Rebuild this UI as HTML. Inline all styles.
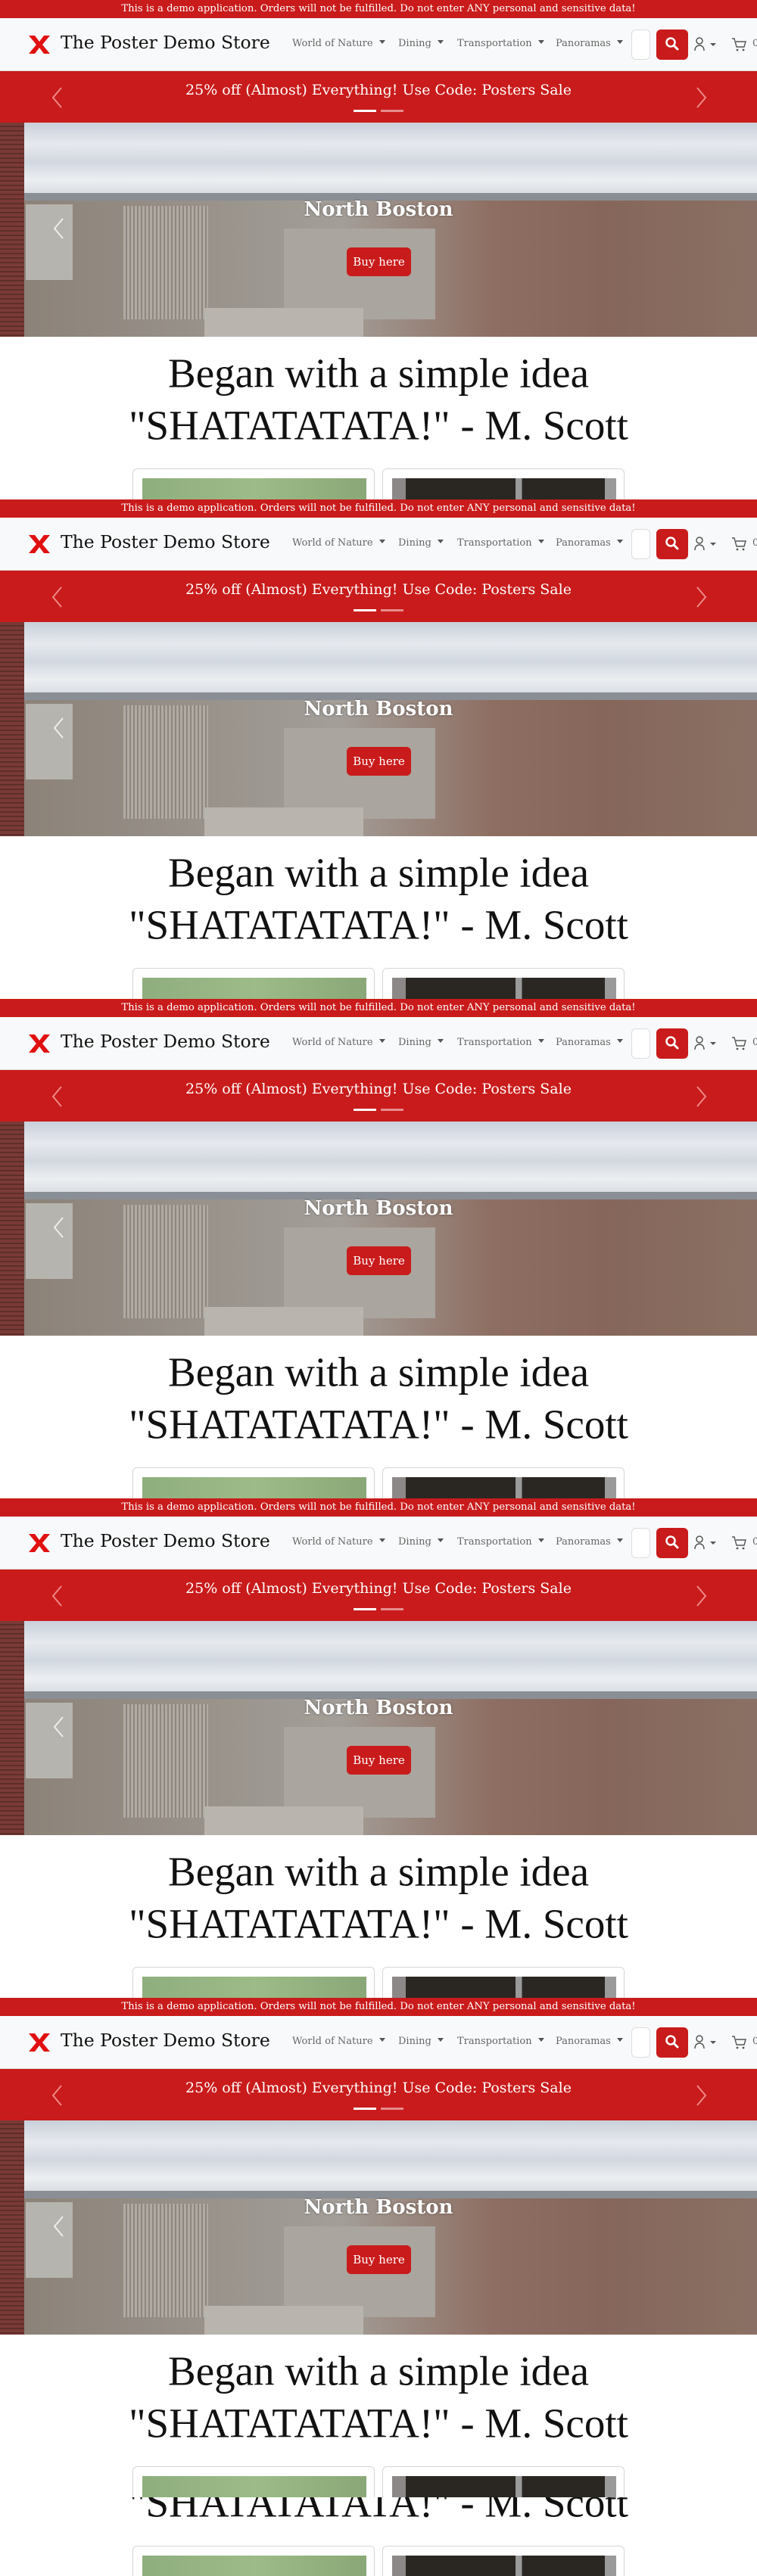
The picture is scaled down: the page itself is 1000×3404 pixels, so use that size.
<!DOCTYPE html>
<html><head><meta charset="utf-8">
<style>
*{box-sizing:border-box;margin:0;padding:0}
body{width:1000px;height:3404px;overflow:hidden;background:#fff;font-family:"DejaVu Serif","Liberation Serif",serif}
.blk{position:relative;width:1000px;height:660px;overflow:hidden;background:#fff}
.demo{position:absolute;left:0;top:0;width:1000px;height:24px;background:#c91b1b;color:#fff;font-size:13.2px;line-height:24px;text-align:center}
.nav{position:absolute;left:0;top:24px;width:1000px;height:70px;background:#f8f9fa;border-bottom:1px solid #ddd}
.logo{position:absolute;left:37px;top:23px;width:30px;height:24px}
.brand{position:absolute;left:80px;top:18px;font-size:23.5px;color:#111;white-space:nowrap}
.mi{position:absolute;top:26px;font-size:13px;color:#666;white-space:nowrap}
.mi:after{content:"";display:inline-block;margin-left:8px;vertical-align:3px;border-left:4px solid transparent;border-right:4px solid transparent;border-top:5px solid #555}
.sin{position:absolute;left:834px;top:15px;width:25px;height:40px;background:#fff;border:1px solid #ddd;border-radius:6px}
.sbt{position:absolute;left:867px;top:15px;width:42px;height:40px;background:#c91b1b;border-radius:6px}
.promo{position:absolute;left:0;top:94px;width:1000px;height:68px;background:#c91b1b;color:#fff}
.promo .t{position:absolute;left:0;right:0;top:14px;text-align:center;font-size:19px}
.ind{position:absolute;top:51px;height:3px;width:30px;background:#fff}
.hero{position:absolute;left:0;top:162px;width:1000px;height:283px;overflow:hidden;background:#8d8a86}
.h1{position:absolute;left:0;right:0;top:493px;transform:translateY(-50%);text-align:center;font-family:"Liberation Serif",serif;font-size:55px;color:#111;white-space:nowrap}
.card{position:absolute;top:619px;width:320px;height:60px;border:1px solid #d5d5d5;border-radius:6px;background:#fff;overflow:hidden}
</style></head><body>

<div class="blk">
<div class="demo">This is a demo application. Orders will not be fulfilled. Do not enter ANY personal and sensitive data!</div>
<div class="nav">
 <svg class="logo" viewBox="0 0 30 24"><path d="M1 0h8l6 8 6-8h8l-10 12 10 12h-8l-6-8-6 8H1l10-12z" fill="#e01010"/></svg>
 <div class="brand">The Poster Demo Store</div>
 <div class="mi" style="left:386px">World of Nature</div>
 <div class="mi" style="left:526px">Dining</div>
 <div class="mi" style="left:604px">Transportation</div>
 <div class="mi" style="left:734px">Panoramas</div>
 <div class="sin"></div>
 <div class="sbt"><svg width="42" height="40" viewBox="0 0 42 40"><circle cx="19" cy="17" r="5.5" stroke="#fff" stroke-width="2.6" fill="none"/><path d="M23 21l5 5" stroke="#fff" stroke-width="3" stroke-linecap="round"/></svg></div>
 <svg style="position:absolute;left:916px;top:24px" width="34" height="22" viewBox="0 0 34 22"><circle cx="8" cy="6" r="4" stroke="#555" stroke-width="1.5" fill="none"/><path d="M2 19c0-5 3-7 6-7s6 2 6 7" stroke="#555" stroke-width="1.5" fill="none"/><path d="M22 9h8l-4 4z" fill="#555"/></svg>
 <svg style="position:absolute;left:965px;top:24px" width="22" height="22" viewBox="0 0 22 22"><path d="M2 3h3l3 11h10l2-7H7" stroke="#555" stroke-width="1.4" fill="none"/><circle cx="9" cy="18" r="1.4" fill="#555"/><circle cx="17" cy="18" r="1.4" fill="#555"/></svg>
 <div style="position:absolute;left:994px;top:26px;font-size:13px;color:#666">0</div>
</div>
<div class="promo">
 <div class="t">25% off (Almost) Everything! Use Code: Posters Sale</div>
 <svg style="position:absolute;left:66px;top:20px" width="18" height="30" viewBox="0 0 18 30"><path d="M15 2L4 15l11 13" stroke="#e88" stroke-width="2" fill="none"/></svg>
 <svg style="position:absolute;left:918px;top:20px" width="18" height="30" viewBox="0 0 18 30"><path d="M3 2l11 13L3 28" stroke="#e88" stroke-width="2" fill="none"/></svg>
 <div class="ind" style="left:467px"></div>
 <div class="ind" style="left:503px;opacity:.5"></div>
</div>
<div class="hero">
 <div style="position:absolute;left:0;top:0;width:1000px;height:95px;background:linear-gradient(180deg,#c9d0da 0%,#e6e9ee 30%,#d2d8e0 55%,#eceef1 80%,#d8dde2 100%)"></div>
 <div style="position:absolute;left:0;top:93px;width:1000px;height:10px;background:#8a8f96"></div>
 <div style="position:absolute;left:0;top:103px;width:1000px;height:180px;background:linear-gradient(90deg,#8a8076 0%,#9a948d 30%,#a39e98 45%,#8e6e62 65%,#86665a 80%,#8a7064 100%)"></div>
 <div style="position:absolute;left:34px;top:108px;width:62px;height:100px;background:#b6b4ae"></div>
 <div style="position:absolute;left:163px;top:110px;width:112px;height:150px;background:repeating-linear-gradient(90deg,#b0aaa2 0 3px,#8e8680 3px 5px)"></div>
 <div style="position:absolute;left:375px;top:140px;width:200px;height:120px;background:#aaa59e"></div>
 <div style="position:absolute;left:270px;top:245px;width:210px;height:38px;background:#b9b5ae"></div>
 <div style="position:absolute;left:0;top:0;width:32px;height:283px;background:repeating-linear-gradient(180deg,#7a3a36 0 4px,#5e2e2a 4px 6px)"></div>
 <svg style="position:absolute;left:68px;top:125px" width="18" height="30" viewBox="0 0 18 30"><path d="M15 2L4 15l11 13" stroke="#eee" stroke-width="2" fill="none"/></svg>
 <div style="position:absolute;left:0;right:0;top:100px;text-align:center;color:#fff;font-size:26px;font-weight:bold;text-shadow:0 0 3px rgba(0,0,0,.4)">North Boston</div>
 <div style="position:absolute;left:458px;top:165px;width:85px;height:38px;background:#c91b1b;border-radius:6px;color:#fff;font-size:15px;line-height:38px;text-align:center">Buy here</div>
</div>
<div class="h1">Began with a simple idea</div>
<div class="h1" style="top:562px">"SHATATATATA!" - M. Scott</div>
<div class="card" style="left:175px"><div style="position:absolute;left:12px;top:12px;width:296px;height:60px;background:linear-gradient(90deg,#8fae7e,#9dbb88 50%,#8aa877)"></div></div>
<div class="card" style="left:505px"><div style="position:absolute;left:12px;top:12px;width:296px;height:60px;background:linear-gradient(90deg,#8d8888 0 6%,#2a2622 6% 55%,#9a9a9a 55% 58%,#2a2622 58% 95%,#9a9a9a 95%)"></div></div>
</div>

<div class="blk">
<div class="demo">This is a demo application. Orders will not be fulfilled. Do not enter ANY personal and sensitive data!</div>
<div class="nav">
 <svg class="logo" viewBox="0 0 30 24"><path d="M1 0h8l6 8 6-8h8l-10 12 10 12h-8l-6-8-6 8H1l10-12z" fill="#e01010"/></svg>
 <div class="brand">The Poster Demo Store</div>
 <div class="mi" style="left:386px">World of Nature</div>
 <div class="mi" style="left:526px">Dining</div>
 <div class="mi" style="left:604px">Transportation</div>
 <div class="mi" style="left:734px">Panoramas</div>
 <div class="sin"></div>
 <div class="sbt"><svg width="42" height="40" viewBox="0 0 42 40"><circle cx="19" cy="17" r="5.5" stroke="#fff" stroke-width="2.6" fill="none"/><path d="M23 21l5 5" stroke="#fff" stroke-width="3" stroke-linecap="round"/></svg></div>
 <svg style="position:absolute;left:916px;top:24px" width="34" height="22" viewBox="0 0 34 22"><circle cx="8" cy="6" r="4" stroke="#555" stroke-width="1.5" fill="none"/><path d="M2 19c0-5 3-7 6-7s6 2 6 7" stroke="#555" stroke-width="1.5" fill="none"/><path d="M22 9h8l-4 4z" fill="#555"/></svg>
 <svg style="position:absolute;left:965px;top:24px" width="22" height="22" viewBox="0 0 22 22"><path d="M2 3h3l3 11h10l2-7H7" stroke="#555" stroke-width="1.4" fill="none"/><circle cx="9" cy="18" r="1.4" fill="#555"/><circle cx="17" cy="18" r="1.4" fill="#555"/></svg>
 <div style="position:absolute;left:994px;top:26px;font-size:13px;color:#666">0</div>
</div>
<div class="promo">
 <div class="t">25% off (Almost) Everything! Use Code: Posters Sale</div>
 <svg style="position:absolute;left:66px;top:20px" width="18" height="30" viewBox="0 0 18 30"><path d="M15 2L4 15l11 13" stroke="#e88" stroke-width="2" fill="none"/></svg>
 <svg style="position:absolute;left:918px;top:20px" width="18" height="30" viewBox="0 0 18 30"><path d="M3 2l11 13L3 28" stroke="#e88" stroke-width="2" fill="none"/></svg>
 <div class="ind" style="left:467px"></div>
 <div class="ind" style="left:503px;opacity:.5"></div>
</div>
<div class="hero">
 <div style="position:absolute;left:0;top:0;width:1000px;height:95px;background:linear-gradient(180deg,#c9d0da 0%,#e6e9ee 30%,#d2d8e0 55%,#eceef1 80%,#d8dde2 100%)"></div>
 <div style="position:absolute;left:0;top:93px;width:1000px;height:10px;background:#8a8f96"></div>
 <div style="position:absolute;left:0;top:103px;width:1000px;height:180px;background:linear-gradient(90deg,#8a8076 0%,#9a948d 30%,#a39e98 45%,#8e6e62 65%,#86665a 80%,#8a7064 100%)"></div>
 <div style="position:absolute;left:34px;top:108px;width:62px;height:100px;background:#b6b4ae"></div>
 <div style="position:absolute;left:163px;top:110px;width:112px;height:150px;background:repeating-linear-gradient(90deg,#b0aaa2 0 3px,#8e8680 3px 5px)"></div>
 <div style="position:absolute;left:375px;top:140px;width:200px;height:120px;background:#aaa59e"></div>
 <div style="position:absolute;left:270px;top:245px;width:210px;height:38px;background:#b9b5ae"></div>
 <div style="position:absolute;left:0;top:0;width:32px;height:283px;background:repeating-linear-gradient(180deg,#7a3a36 0 4px,#5e2e2a 4px 6px)"></div>
 <svg style="position:absolute;left:68px;top:125px" width="18" height="30" viewBox="0 0 18 30"><path d="M15 2L4 15l11 13" stroke="#eee" stroke-width="2" fill="none"/></svg>
 <div style="position:absolute;left:0;right:0;top:100px;text-align:center;color:#fff;font-size:26px;font-weight:bold;text-shadow:0 0 3px rgba(0,0,0,.4)">North Boston</div>
 <div style="position:absolute;left:458px;top:165px;width:85px;height:38px;background:#c91b1b;border-radius:6px;color:#fff;font-size:15px;line-height:38px;text-align:center">Buy here</div>
</div>
<div class="h1">Began with a simple idea</div>
<div class="h1" style="top:562px">"SHATATATATA!" - M. Scott</div>
<div class="card" style="left:175px"><div style="position:absolute;left:12px;top:12px;width:296px;height:60px;background:linear-gradient(90deg,#8fae7e,#9dbb88 50%,#8aa877)"></div></div>
<div class="card" style="left:505px"><div style="position:absolute;left:12px;top:12px;width:296px;height:60px;background:linear-gradient(90deg,#8d8888 0 6%,#2a2622 6% 55%,#9a9a9a 55% 58%,#2a2622 58% 95%,#9a9a9a 95%)"></div></div>
</div>

<div class="blk">
<div class="demo">This is a demo application. Orders will not be fulfilled. Do not enter ANY personal and sensitive data!</div>
<div class="nav">
 <svg class="logo" viewBox="0 0 30 24"><path d="M1 0h8l6 8 6-8h8l-10 12 10 12h-8l-6-8-6 8H1l10-12z" fill="#e01010"/></svg>
 <div class="brand">The Poster Demo Store</div>
 <div class="mi" style="left:386px">World of Nature</div>
 <div class="mi" style="left:526px">Dining</div>
 <div class="mi" style="left:604px">Transportation</div>
 <div class="mi" style="left:734px">Panoramas</div>
 <div class="sin"></div>
 <div class="sbt"><svg width="42" height="40" viewBox="0 0 42 40"><circle cx="19" cy="17" r="5.5" stroke="#fff" stroke-width="2.6" fill="none"/><path d="M23 21l5 5" stroke="#fff" stroke-width="3" stroke-linecap="round"/></svg></div>
 <svg style="position:absolute;left:916px;top:24px" width="34" height="22" viewBox="0 0 34 22"><circle cx="8" cy="6" r="4" stroke="#555" stroke-width="1.5" fill="none"/><path d="M2 19c0-5 3-7 6-7s6 2 6 7" stroke="#555" stroke-width="1.5" fill="none"/><path d="M22 9h8l-4 4z" fill="#555"/></svg>
 <svg style="position:absolute;left:965px;top:24px" width="22" height="22" viewBox="0 0 22 22"><path d="M2 3h3l3 11h10l2-7H7" stroke="#555" stroke-width="1.4" fill="none"/><circle cx="9" cy="18" r="1.4" fill="#555"/><circle cx="17" cy="18" r="1.4" fill="#555"/></svg>
 <div style="position:absolute;left:994px;top:26px;font-size:13px;color:#666">0</div>
</div>
<div class="promo">
 <div class="t">25% off (Almost) Everything! Use Code: Posters Sale</div>
 <svg style="position:absolute;left:66px;top:20px" width="18" height="30" viewBox="0 0 18 30"><path d="M15 2L4 15l11 13" stroke="#e88" stroke-width="2" fill="none"/></svg>
 <svg style="position:absolute;left:918px;top:20px" width="18" height="30" viewBox="0 0 18 30"><path d="M3 2l11 13L3 28" stroke="#e88" stroke-width="2" fill="none"/></svg>
 <div class="ind" style="left:467px"></div>
 <div class="ind" style="left:503px;opacity:.5"></div>
</div>
<div class="hero">
 <div style="position:absolute;left:0;top:0;width:1000px;height:95px;background:linear-gradient(180deg,#c9d0da 0%,#e6e9ee 30%,#d2d8e0 55%,#eceef1 80%,#d8dde2 100%)"></div>
 <div style="position:absolute;left:0;top:93px;width:1000px;height:10px;background:#8a8f96"></div>
 <div style="position:absolute;left:0;top:103px;width:1000px;height:180px;background:linear-gradient(90deg,#8a8076 0%,#9a948d 30%,#a39e98 45%,#8e6e62 65%,#86665a 80%,#8a7064 100%)"></div>
 <div style="position:absolute;left:34px;top:108px;width:62px;height:100px;background:#b6b4ae"></div>
 <div style="position:absolute;left:163px;top:110px;width:112px;height:150px;background:repeating-linear-gradient(90deg,#b0aaa2 0 3px,#8e8680 3px 5px)"></div>
 <div style="position:absolute;left:375px;top:140px;width:200px;height:120px;background:#aaa59e"></div>
 <div style="position:absolute;left:270px;top:245px;width:210px;height:38px;background:#b9b5ae"></div>
 <div style="position:absolute;left:0;top:0;width:32px;height:283px;background:repeating-linear-gradient(180deg,#7a3a36 0 4px,#5e2e2a 4px 6px)"></div>
 <svg style="position:absolute;left:68px;top:125px" width="18" height="30" viewBox="0 0 18 30"><path d="M15 2L4 15l11 13" stroke="#eee" stroke-width="2" fill="none"/></svg>
 <div style="position:absolute;left:0;right:0;top:100px;text-align:center;color:#fff;font-size:26px;font-weight:bold;text-shadow:0 0 3px rgba(0,0,0,.4)">North Boston</div>
 <div style="position:absolute;left:458px;top:165px;width:85px;height:38px;background:#c91b1b;border-radius:6px;color:#fff;font-size:15px;line-height:38px;text-align:center">Buy here</div>
</div>
<div class="h1">Began with a simple idea</div>
<div class="h1" style="top:562px">"SHATATATATA!" - M. Scott</div>
<div class="card" style="left:175px"><div style="position:absolute;left:12px;top:12px;width:296px;height:60px;background:linear-gradient(90deg,#8fae7e,#9dbb88 50%,#8aa877)"></div></div>
<div class="card" style="left:505px"><div style="position:absolute;left:12px;top:12px;width:296px;height:60px;background:linear-gradient(90deg,#8d8888 0 6%,#2a2622 6% 55%,#9a9a9a 55% 58%,#2a2622 58% 95%,#9a9a9a 95%)"></div></div>
</div>

<div class="blk">
<div class="demo">This is a demo application. Orders will not be fulfilled. Do not enter ANY personal and sensitive data!</div>
<div class="nav">
 <svg class="logo" viewBox="0 0 30 24"><path d="M1 0h8l6 8 6-8h8l-10 12 10 12h-8l-6-8-6 8H1l10-12z" fill="#e01010"/></svg>
 <div class="brand">The Poster Demo Store</div>
 <div class="mi" style="left:386px">World of Nature</div>
 <div class="mi" style="left:526px">Dining</div>
 <div class="mi" style="left:604px">Transportation</div>
 <div class="mi" style="left:734px">Panoramas</div>
 <div class="sin"></div>
 <div class="sbt"><svg width="42" height="40" viewBox="0 0 42 40"><circle cx="19" cy="17" r="5.5" stroke="#fff" stroke-width="2.6" fill="none"/><path d="M23 21l5 5" stroke="#fff" stroke-width="3" stroke-linecap="round"/></svg></div>
 <svg style="position:absolute;left:916px;top:24px" width="34" height="22" viewBox="0 0 34 22"><circle cx="8" cy="6" r="4" stroke="#555" stroke-width="1.5" fill="none"/><path d="M2 19c0-5 3-7 6-7s6 2 6 7" stroke="#555" stroke-width="1.5" fill="none"/><path d="M22 9h8l-4 4z" fill="#555"/></svg>
 <svg style="position:absolute;left:965px;top:24px" width="22" height="22" viewBox="0 0 22 22"><path d="M2 3h3l3 11h10l2-7H7" stroke="#555" stroke-width="1.4" fill="none"/><circle cx="9" cy="18" r="1.4" fill="#555"/><circle cx="17" cy="18" r="1.4" fill="#555"/></svg>
 <div style="position:absolute;left:994px;top:26px;font-size:13px;color:#666">0</div>
</div>
<div class="promo">
 <div class="t">25% off (Almost) Everything! Use Code: Posters Sale</div>
 <svg style="position:absolute;left:66px;top:20px" width="18" height="30" viewBox="0 0 18 30"><path d="M15 2L4 15l11 13" stroke="#e88" stroke-width="2" fill="none"/></svg>
 <svg style="position:absolute;left:918px;top:20px" width="18" height="30" viewBox="0 0 18 30"><path d="M3 2l11 13L3 28" stroke="#e88" stroke-width="2" fill="none"/></svg>
 <div class="ind" style="left:467px"></div>
 <div class="ind" style="left:503px;opacity:.5"></div>
</div>
<div class="hero">
 <div style="position:absolute;left:0;top:0;width:1000px;height:95px;background:linear-gradient(180deg,#c9d0da 0%,#e6e9ee 30%,#d2d8e0 55%,#eceef1 80%,#d8dde2 100%)"></div>
 <div style="position:absolute;left:0;top:93px;width:1000px;height:10px;background:#8a8f96"></div>
 <div style="position:absolute;left:0;top:103px;width:1000px;height:180px;background:linear-gradient(90deg,#8a8076 0%,#9a948d 30%,#a39e98 45%,#8e6e62 65%,#86665a 80%,#8a7064 100%)"></div>
 <div style="position:absolute;left:34px;top:108px;width:62px;height:100px;background:#b6b4ae"></div>
 <div style="position:absolute;left:163px;top:110px;width:112px;height:150px;background:repeating-linear-gradient(90deg,#b0aaa2 0 3px,#8e8680 3px 5px)"></div>
 <div style="position:absolute;left:375px;top:140px;width:200px;height:120px;background:#aaa59e"></div>
 <div style="position:absolute;left:270px;top:245px;width:210px;height:38px;background:#b9b5ae"></div>
 <div style="position:absolute;left:0;top:0;width:32px;height:283px;background:repeating-linear-gradient(180deg,#7a3a36 0 4px,#5e2e2a 4px 6px)"></div>
 <svg style="position:absolute;left:68px;top:125px" width="18" height="30" viewBox="0 0 18 30"><path d="M15 2L4 15l11 13" stroke="#eee" stroke-width="2" fill="none"/></svg>
 <div style="position:absolute;left:0;right:0;top:100px;text-align:center;color:#fff;font-size:26px;font-weight:bold;text-shadow:0 0 3px rgba(0,0,0,.4)">North Boston</div>
 <div style="position:absolute;left:458px;top:165px;width:85px;height:38px;background:#c91b1b;border-radius:6px;color:#fff;font-size:15px;line-height:38px;text-align:center">Buy here</div>
</div>
<div class="h1">Began with a simple idea</div>
<div class="h1" style="top:562px">"SHATATATATA!" - M. Scott</div>
<div class="card" style="left:175px"><div style="position:absolute;left:12px;top:12px;width:296px;height:60px;background:linear-gradient(90deg,#8fae7e,#9dbb88 50%,#8aa877)"></div></div>
<div class="card" style="left:505px"><div style="position:absolute;left:12px;top:12px;width:296px;height:60px;background:linear-gradient(90deg,#8d8888 0 6%,#2a2622 6% 55%,#9a9a9a 55% 58%,#2a2622 58% 95%,#9a9a9a 95%)"></div></div>
</div>

<div class="blk">
<div class="demo">This is a demo application. Orders will not be fulfilled. Do not enter ANY personal and sensitive data!</div>
<div class="nav">
 <svg class="logo" viewBox="0 0 30 24"><path d="M1 0h8l6 8 6-8h8l-10 12 10 12h-8l-6-8-6 8H1l10-12z" fill="#e01010"/></svg>
 <div class="brand">The Poster Demo Store</div>
 <div class="mi" style="left:386px">World of Nature</div>
 <div class="mi" style="left:526px">Dining</div>
 <div class="mi" style="left:604px">Transportation</div>
 <div class="mi" style="left:734px">Panoramas</div>
 <div class="sin"></div>
 <div class="sbt"><svg width="42" height="40" viewBox="0 0 42 40"><circle cx="19" cy="17" r="5.5" stroke="#fff" stroke-width="2.6" fill="none"/><path d="M23 21l5 5" stroke="#fff" stroke-width="3" stroke-linecap="round"/></svg></div>
 <svg style="position:absolute;left:916px;top:24px" width="34" height="22" viewBox="0 0 34 22"><circle cx="8" cy="6" r="4" stroke="#555" stroke-width="1.5" fill="none"/><path d="M2 19c0-5 3-7 6-7s6 2 6 7" stroke="#555" stroke-width="1.5" fill="none"/><path d="M22 9h8l-4 4z" fill="#555"/></svg>
 <svg style="position:absolute;left:965px;top:24px" width="22" height="22" viewBox="0 0 22 22"><path d="M2 3h3l3 11h10l2-7H7" stroke="#555" stroke-width="1.4" fill="none"/><circle cx="9" cy="18" r="1.4" fill="#555"/><circle cx="17" cy="18" r="1.4" fill="#555"/></svg>
 <div style="position:absolute;left:994px;top:26px;font-size:13px;color:#666">0</div>
</div>
<div class="promo">
 <div class="t">25% off (Almost) Everything! Use Code: Posters Sale</div>
 <svg style="position:absolute;left:66px;top:20px" width="18" height="30" viewBox="0 0 18 30"><path d="M15 2L4 15l11 13" stroke="#e88" stroke-width="2" fill="none"/></svg>
 <svg style="position:absolute;left:918px;top:20px" width="18" height="30" viewBox="0 0 18 30"><path d="M3 2l11 13L3 28" stroke="#e88" stroke-width="2" fill="none"/></svg>
 <div class="ind" style="left:467px"></div>
 <div class="ind" style="left:503px;opacity:.5"></div>
</div>
<div class="hero">
 <div style="position:absolute;left:0;top:0;width:1000px;height:95px;background:linear-gradient(180deg,#c9d0da 0%,#e6e9ee 30%,#d2d8e0 55%,#eceef1 80%,#d8dde2 100%)"></div>
 <div style="position:absolute;left:0;top:93px;width:1000px;height:10px;background:#8a8f96"></div>
 <div style="position:absolute;left:0;top:103px;width:1000px;height:180px;background:linear-gradient(90deg,#8a8076 0%,#9a948d 30%,#a39e98 45%,#8e6e62 65%,#86665a 80%,#8a7064 100%)"></div>
 <div style="position:absolute;left:34px;top:108px;width:62px;height:100px;background:#b6b4ae"></div>
 <div style="position:absolute;left:163px;top:110px;width:112px;height:150px;background:repeating-linear-gradient(90deg,#b0aaa2 0 3px,#8e8680 3px 5px)"></div>
 <div style="position:absolute;left:375px;top:140px;width:200px;height:120px;background:#aaa59e"></div>
 <div style="position:absolute;left:270px;top:245px;width:210px;height:38px;background:#b9b5ae"></div>
 <div style="position:absolute;left:0;top:0;width:32px;height:283px;background:repeating-linear-gradient(180deg,#7a3a36 0 4px,#5e2e2a 4px 6px)"></div>
 <svg style="position:absolute;left:68px;top:125px" width="18" height="30" viewBox="0 0 18 30"><path d="M15 2L4 15l11 13" stroke="#eee" stroke-width="2" fill="none"/></svg>
 <div style="position:absolute;left:0;right:0;top:100px;text-align:center;color:#fff;font-size:26px;font-weight:bold;text-shadow:0 0 3px rgba(0,0,0,.4)">North Boston</div>
 <div style="position:absolute;left:458px;top:165px;width:85px;height:38px;background:#c91b1b;border-radius:6px;color:#fff;font-size:15px;line-height:38px;text-align:center">Buy here</div>
</div>
<div class="h1">Began with a simple idea</div>
<div class="h1" style="top:562px">"SHATATATATA!" - M. Scott</div>
<div class="card" style="left:175px"><div style="position:absolute;left:12px;top:12px;width:296px;height:60px;background:linear-gradient(90deg,#8fae7e,#9dbb88 50%,#8aa877)"></div></div>
<div class="card" style="left:505px"><div style="position:absolute;left:12px;top:12px;width:296px;height:60px;background:linear-gradient(90deg,#8d8888 0 6%,#2a2622 6% 55%,#9a9a9a 55% 58%,#2a2622 58% 95%,#9a9a9a 95%)"></div></div>
</div>

<div style="position:relative;width:1000px;height:104px;overflow:hidden;background:#fff">
 <div class="h1" style="top:7px">"SHATATATATA!" - M. Scott</div>
 <div class="card" style="left:175px;top:64px"><div style="position:absolute;left:12px;top:12px;width:296px;height:60px;background:linear-gradient(90deg,#8fae7e,#9dbb88 50%,#8aa877)"></div></div>
 <div class="card" style="left:505px;top:64px"><div style="position:absolute;left:12px;top:12px;width:296px;height:60px;background:linear-gradient(90deg,#8d8888 0 6%,#2a2622 6% 55%,#9a9a9a 55% 58%,#2a2622 58% 95%,#9a9a9a 95%)"></div></div>
</div>
</body></html>
